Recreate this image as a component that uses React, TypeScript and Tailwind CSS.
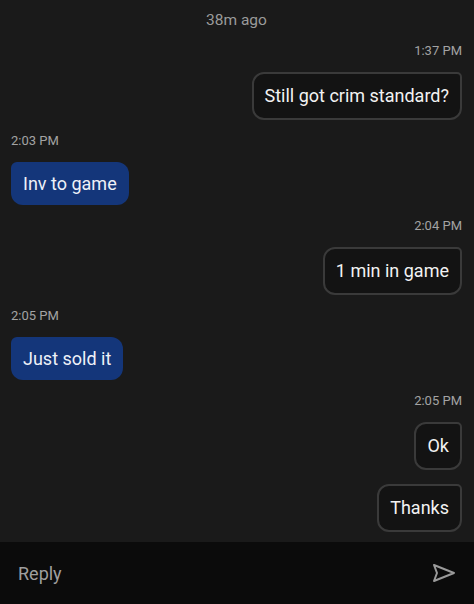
import React from "react";

type Msg = { time?: string; text: string; mine: boolean };

const messages: Msg[] = [
  { time: "1:37 PM", text: "Still got crim standard?", mine: true },
  { time: "2:03 PM", text: "Inv to game", mine: false },
  { time: "2:04 PM", text: "1 min in game", mine: true },
  { time: "2:05 PM", text: "Just sold it", mine: false },
  { time: "2:05 PM", text: "Ok", mine: true },
  { text: "Thanks", mine: true },
];

function SendIcon() {
  return (
    <svg width="24" height="20" viewBox="0 0 24 20" fill="none">
      <path
        d="M2 2 L22 10 L2 18 L5 10 Z"
        stroke="#9a9a9a"
        strokeWidth={2}
        strokeLinejoin="round"
      />
    </svg>
  );
}

export default function App() {
  return (
    <div
      className="w-[474px] h-[604px] bg-[#1a1a1a] flex flex-col overflow-hidden"
      style={{ fontFamily: "Roboto, 'Noto Sans', sans-serif" }}
    >
      <div className="flex-1 flex flex-col pt-[10px] pl-[11px] pr-[12px]">
        <div className="h-[20px] leading-[20px] text-[15.5px] text-[#9b9b9b] text-center">
          38m ago
        </div>
        {messages.map((m, i) => (
          <div
            key={i}
            className={`flex flex-col ${m.mine ? "items-end" : "items-start"} ${
              m.time ? "mt-[13px]" : "mt-[14px]"
            }`}
          >
            {m.time && (
              <div className="h-[16px] leading-[16px] text-[13px] text-[#a3a3a3] mb-[13px]">
                {m.time}
              </div>
            )}
            {m.mine ? (
              <div className="border-2 border-[#3a3a3a] bg-[#131313] rounded-xl rounded-tr-[5px] px-[11px] py-[10px] text-[18px] leading-[24px] text-[#f2f2f2]">
                {m.text}
              </div>
            ) : (
              <div className="bg-[#14367a] rounded-xl rounded-tl-[6px] px-[12px] py-[10px] text-[18px] leading-[23px] text-[#eef1f8]">
                {m.text}
              </div>
            )}
          </div>
        ))}
      </div>
      <div className="h-[62px] bg-[#0b0b0b] flex items-center justify-between pl-[18px] pr-[18px]">
        <span className="text-[18px] text-[#9f9f9f]">Reply</span>
        <SendIcon />
      </div>
    </div>
  );
}
